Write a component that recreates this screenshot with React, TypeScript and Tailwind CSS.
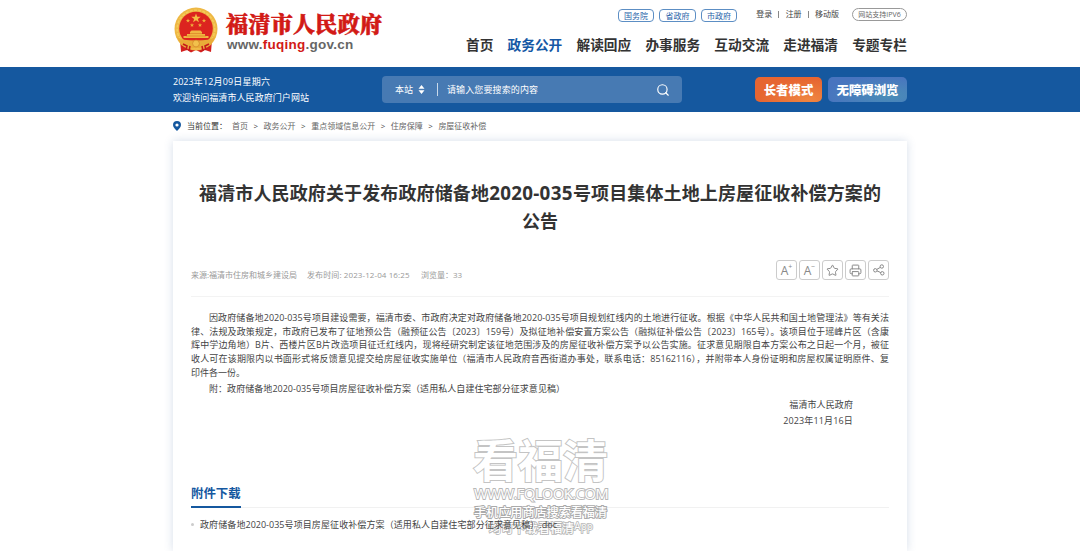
import { Search, Star, Printer } from "lucide-react";
import type { ReactNode } from "react";

const navItems = ["首页", "政务公开", "解读回应", "办事服务", "互动交流", "走进福清", "专题专栏"];
const govLinks = ["国务院", "省政府", "市政府"];
const crumbs = [
    { label: "首页", width: "w-[16px]" },
    { label: "政务公开", width: "w-[32px]" },
    { label: "重点领域信息公开", width: "w-[64px]" },
    { label: "住房保障", width: "w-[32px]" },
    { label: "房屋征收补偿", width: "w-[48px]" },
];

const paragraph = [
    "律、法规及政策规定，市政府已发布了征地预公告（融预征公告〔2023〕159号）及拟征地补偿安置方案公告（融拟征补偿公告〔2023〕165号）。该项目位于瑶峰片区（含康",
    "辉中学边角地）B片、西楼片区B片改造项目征迁红线内，现将经研究制定该征地范围涉及的房屋征收补偿方案予以公告实施。征求意见期限自本方案公布之日起一个月，被征",
    "收人可在该期限内以书面形式将反馈意见提交给房屋征收实施单位（福清市人民政府音西街道办事处，联系电话：85162116），并附带本人身份证明和房屋权属证明原件、复",
];

const justify = "whitespace-nowrap [text-align-last:justify]";

const Emblem = () => (
    <svg width="44" height="46" viewBox="0 0 44 46">
        <path d="M6 33 L38 33 L37 45 L31 43 L27 45.5 L22 43 L17 45.5 L13 43 L7 45 Z" fill="#d3201f" />
        <circle cx="22" cy="22" r="21.5" fill="#eeb844" />
        <circle cx="22" cy="22" r="18.8" fill="none" stroke="#f5cb5c" strokeWidth="1.6" strokeDasharray="3 1.3" />
        <circle cx="22" cy="21.5" r="16.8" fill="#dc241f" />
        <path d="M22 6.5l1.2 3.2 3.5.1-2.8 2.1 1 3.3-2.9-1.9-2.9 1.9 1-3.3-2.8-2.1 3.5-.1z" fill="#f4bd43" />
        <g fill="#f0ae3c">
            <path d="M14 11.5l.6 1.5h1.5l-1.2 1 .4 1.5-1.3-.9-1.3.9.4-1.5-1.2-1h1.5z" />
            <path d="M30 11.5l.6 1.5h1.5l-1.2 1 .4 1.5-1.3-.9-1.3.9.4-1.5-1.2-1h1.5z" />
            <path d="M18 16l.6 1.5h1.5l-1.2 1 .4 1.5-1.3-.9-1.3.9.4-1.5-1.2-1h1.5z" />
            <path d="M26 16l.6 1.5h1.5l-1.2 1 .4 1.5-1.3-.9-1.3.9.4-1.5-1.2-1h1.5z" />
        </g>
        <path d="M16 25l1.5-1.5h9L28 25v2h3v2h3.5v2H9.5v-2H13v-2h3z" fill="#f0b541" />
        <path d="M12 29h20M16 26.5h12" stroke="#d97724" strokeWidth=".6" />
        <path d="M3 30 Q8 33.5 22 33.5 Q36 33.5 41 30 L37 38 Q30 42 22 41 Q14 42 7 38Z" fill="#e9ac38" />
        <path d="M9 37l4 2-1 4M35 37l-4 2 1 4M16 39l-1 5M28 39l1 5" stroke="#c51b1b" strokeWidth="1.6" fill="none" />
        <circle cx="22" cy="36.5" r="3.4" fill="#f2c14c" stroke="#cc7a25" strokeWidth=".6" />
    </svg>
);

const ToolButton = ({ children }: { children: ReactNode }) => (
    <button className="flex h-[20px] w-[21px] items-center justify-center rounded-[3px] border border-[#ccc] text-[#888]">
        {children}
    </button>
);

const FontSize = ({ sign }: { sign: string }) => (
    <span className="flex items-start pt-px text-[12px] leading-[14px]">
        A<sup className="top-0 text-[7px] leading-[6px]">{sign}</sup>
    </span>
);

const ShareIcon = () => (
    <svg width="12" height="12" viewBox="0 0 12 12" fill="none" stroke="currentColor">
        <circle cx="2.3" cy="6.3" r="1.7" />
        <circle cx="8.8" cy="2.5" r="1.7" />
        <circle cx="9.3" cy="9.3" r="1.7" />
        <path d="M3.8 5.4L7.3 3.4M4 6.9l3.8 1.7" />
    </svg>
);

const Header = () => (
    <header className="mx-auto flex h-[67px] w-[734px] justify-between">
        <div className="flex pt-[7px] pl-px">
            <Emblem />
            <div className="ml-[8px]">
                <h1 className={`mt-[2px] w-[156px] text-[22px] leading-[27px] font-black text-[#d21a16] font-['Noto_Serif_CJK_SC','Noto_Sans_CJK_SC',serif] [-webkit-text-stroke:0.6px_#d21a16] ${justify}`}>
                    福清市人民政府
                </h1>
                <p className="ml-px mt-px text-[13.5px] leading-[15px] font-bold tracking-[0.25px] whitespace-nowrap text-[#666] font-['Liberation_Sans',sans-serif]">
                    www.<span className="text-[#d21a16]">fuqing</span>.gov.cn
                </p>
            </div>
        </div>
        <div className="flex w-[441px] flex-col">
            <div className="flex h-[13px] mt-[8px] justify-end items-center">
                <div className="mt-[2px] flex gap-[5px]">
                    {govLinks.map((item) => (
                        <a key={item} className="flex h-[13px] w-[36.5px] items-center justify-center rounded-[4px] border border-[#5c8ec4] text-[8px] leading-none text-[#2864a9]">{item}</a>
                    ))}
                </div>
                <div className="ml-[19px] flex items-center pb-px text-[8px] leading-none text-[#444]">
                    <span>登录</span>
                    <span className="mx-[6.2px] h-[7px] w-px bg-[#888]" />
                    <span>注册</span>
                    <span className="mx-[6.2px] h-[7px] w-px bg-[#888]" />
                    <span>移动版</span>
                </div>
                <span className="ml-[13px] flex h-[13px] w-[55px] items-center justify-center rounded-full border border-[#999] text-[7px] leading-none whitespace-nowrap text-[#666]">网站支持IPV6</span>
            </div>
            <nav className="mt-[14px] flex justify-between text-[13.7px] leading-[20px] font-bold whitespace-nowrap text-[#333]">
                {navItems.map((item) => (
                    <a key={item} className={item === "政务公开" ? "text-[#1558a5]" : ""}>{item}</a>
                ))}
            </nav>
        </div>
    </header>
);

const SearchBar = () => (
    <div className="h-[45px] bg-[#15589f]">
        <div className="mx-auto flex h-full w-[734px] items-center text-[9px] text-white">
            <div className="w-[209px] leading-[16px]">
                <p className={`w-[97px] ${justify}`}>2023年12月09日星期六</p>
                <p className={`w-[136px] ${justify}`}>欢迎访问福清市人民政府门户网站</p>
            </div>
            <div className="flex h-[27px] w-[300px] items-center rounded-[4px] bg-[#477ab3] pl-[13px]">
                <span className="w-[19px] whitespace-nowrap">本站</span>
                <svg className="ml-[4px]" width="7" height="9" viewBox="0 0 7 9" fill="white"><path d="M3.5 0L6.5 3.7H.5zM3.5 9L6.5 5.3H.5z" /></svg>
                <span className="ml-[12px] h-[13px] w-px bg-[#c9d9ea]" />
                <span className={`ml-[9px] w-[91px] ${justify}`}>请输入您要搜索的内容</span>
                <Search className="ml-auto mr-[12px]" size={14} strokeWidth={2} />
            </div>
            <button className="ml-[73px] h-[25px] w-[67px] rounded-[5px] bg-radial-[at_80%_90%] from-[#ef8540] to-[#e66531] to-65% pt-[2px] text-[12.4px] leading-[20px] font-black whitespace-nowrap">长者模式</button>
            <button className="ml-[6px] h-[25px] w-[79px] rounded-[5px] bg-radial-[at_75%_75%] from-[#4a8db7] to-[#4874bf] to-75% pt-[2px] text-[12.4px] leading-[20px] font-black whitespace-nowrap">无障碍浏览</button>
        </div>
    </div>
);

const Breadcrumb = () => (
    <div className="mx-auto flex h-[29px] w-[734px] items-center pb-px text-[8px] leading-none whitespace-nowrap text-[#666]">
        <svg width="8" height="10" viewBox="0 0 8 10"><path d="M4 0a4 4 0 0 1 4 4c0 2.5-2.5 4.3-4 6C2.5 8.3 0 6.5 0 4a4 4 0 0 1 4-4z" fill="#15589f" /><circle cx="4" cy="4" r="1.6" fill="white" /></svg>
        <span className="ml-[6px] w-[45px] text-[#333]">当前位置：</span>
        {crumbs.map((crumb, i) => (
            <span key={crumb.label} className="flex">
                {i > 0 && <span className="w-[15.6px] text-center text-[#444]">&gt;</span>}
                <span className={crumb.width}>{crumb.label}</span>
            </span>
        ))}
    </div>
);

// 描边水印，附件链接的文字仍显示在它上面
const Watermark = () => (
    <div className="pointer-events-none absolute top-[295px] left-[300px] w-[136px] whitespace-nowrap text-white [paint-order:stroke_fill]">
        <p className="text-[45px] leading-[50px] font-bold [-webkit-text-stroke:2px_#c4c4c4]">看福清</p>
        <p className="pl-px text-[15px] leading-[14px] tracking-[-0.7px] [-webkit-text-stroke:1.8px_#b8b8b8]">WWW.FQLOOK.COM</p>
        <p className="mt-[4px] pl-px text-[12.1px] leading-[17px] font-medium [-webkit-text-stroke:1.8px_#aaa]">手机应用商店搜索看福清</p>
        <p className="pl-[16px] text-[12.2px] leading-[15px] font-medium [-webkit-text-stroke:1.6px_#b4b4b4]">均可下载看福清<span className="relative -top-[3px] text-[10px]">App</span></p>
    </div>
);

const Article = () => (
    <main className="relative mx-auto h-[410px] w-[734px] bg-white px-[18px] text-[9px] text-[#444] shadow-[0_0_9px_rgba(50,90,150,0.2)]">
        <h2 className="pt-[38px] text-center text-[18px] leading-[28px] font-bold text-[#333]">
            <span className={`mx-auto block w-[682px] ${justify}`}>福清市人民政府关于发布政府储备地<span className="text-[18.8px] tracking-[0.3px]">2020-035</span>号项目集体土地上房屋征收补偿方案的</span>
            公告
        </h2>
        <div className="mt-[25px] flex h-[20px] justify-between">
            <div className="flex pt-[8px] text-[8px] leading-[14px] whitespace-nowrap text-[#999]">
                <span className="w-[116px]">来源:福清市住房和城乡建设局</span>
                <span className="w-[114px] tracking-[0.1px]">发布时间: 2023-12-04 16:25</span>
                <span>浏览量：33</span>
            </div>
            <div className="flex gap-[2px]">
                <ToolButton><FontSize sign="+" /></ToolButton>
                <ToolButton><FontSize sign="−" /></ToolButton>
                <ToolButton><Star size={13} strokeWidth={1.8} /></ToolButton>
                <ToolButton><Printer size={13} strokeWidth={1.8} /></ToolButton>
                <ToolButton><ShareIcon /></ToolButton>
            </div>
        </div>
        <div className="mt-[16px] h-px bg-[#f3f3f3]" />
        <div className="mt-[14px] leading-[13.7px]">
            <p className={`pl-[18px] ${justify}`}>因政府储备地2020-035号项目建设需要，福清市委、市政府决定对政府储备地2020-035号项目规划红线内的土地进行征收。根据《中华人民共和国土地管理法》等有关法</p>
            {paragraph.map((line) => (
                <p key={line} className={justify}>{line}</p>
            ))}
            <p>印件各一份。</p>
        </div>
        <p className={`mt-[2px] ml-[18px] w-[356px] leading-[13px] ${justify}`}>附：政府储备地2020-035号项目房屋征收补偿方案（适用私人自建住宅部分征求意见稿）</p>
        <div className="mt-[2px] pr-[36px] text-right leading-[16.5px]">
            <p className="tracking-[0.1px]">福清市人民政府</p>
            <p className="tracking-[0.15px]">2023年11月16日</p>
        </div>
        <div className="mt-[53px] flex h-[25px] border-b border-[#f1f1f1]">
            <h3 className="h-[25px] w-[50px] border-b-2 border-[#15589f] text-[12.4px] leading-[22px] font-bold whitespace-nowrap text-[#15589f]">附件下载</h3>
        </div>
        <div className="relative z-10 mt-[10px] flex items-center leading-[14px]">
            <span className="mr-[6px] h-[3px] w-[3px] rounded-full bg-[#ccc]" />
            <a className={`w-[357px] ${justify}`}>政府储备地2020-035号项目房屋征收补偿方案（适用私人自建住宅部分征求意见稿）.doc</a>
        </div>
        <Watermark />
    </main>
);

export default function App() {
    return (
        <div className="h-[551px] overflow-hidden bg-white font-['Open_Sans','Noto_Sans_CJK_SC',sans-serif]">
            <Header />
            <SearchBar />
            <Breadcrumb />
            <Article />
        </div>
    );
}
